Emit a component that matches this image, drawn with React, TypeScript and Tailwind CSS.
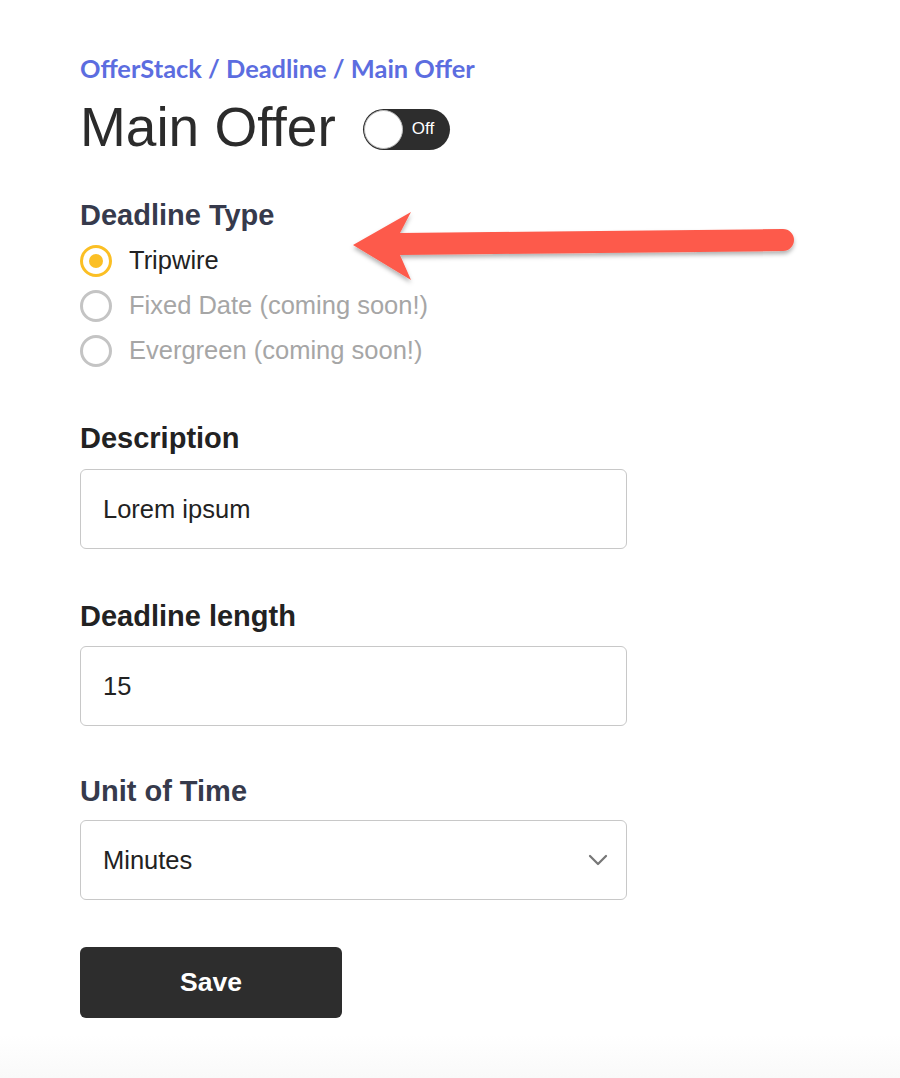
import { ChevronDown } from "lucide-react";

const sans = "font-['Liberation_Sans',Arial,sans-serif]";

function Radio({ label, checked, disabled }: { label: string; checked?: boolean; disabled?: boolean }) {
  return (
    <label className="flex h-[45px] items-center gap-[17px]">
      <span
        className={`flex h-[32px] w-[32px] items-center justify-center rounded-full border-[3px] ${
          checked ? "border-[#fbbf24]" : "border-[#c4c4c4]"
        }`}
      >
        {checked && <span className="h-[14px] w-[14px] rounded-full bg-[#fbbf24]" />}
      </span>
      <span className={`text-[25.5px] ${disabled ? "text-[#a6a6a6]" : "text-[#222]"}`}>{label}</span>
    </label>
  );
}

export default function App() {
  const input =
    "flex h-[80px] w-[547px] items-center rounded-[6px] border border-[#c8c8c8] px-[22px] text-[25.5px] text-[#222]";
  const label = "text-[29px] font-bold leading-[36px]";

  return (
    <div className={`relative min-h-[1078px] bg-gradient-to-b from-white from-[96%] to-[#f9f9f9] ${sans}`}>
      <div className="flex w-[548px] flex-col pl-[80px] pt-[52px]">
        <div className="font-['Lato',sans-serif] text-[25.4px] font-bold leading-[32px] text-[#5c6de0]">
          OfferStack / Deadline / Main Offer
        </div>

        <div className="mt-[11px] flex items-center gap-[27px]">
          <h1 className="text-[55px] leading-[64px] text-[#2b2b2b]">Main Offer</h1>
          <div className="mt-[4px] flex h-[41px] w-[87px] items-center rounded-full bg-[#2d2d2d] px-[1px]">
            <span className="h-[39px] w-[39px] rounded-full border border-[#bbb] bg-white" />
            <span className="ml-[9px] text-[17px] text-white">Off</span>
          </div>
        </div>

        <div className={`mt-[38px] ${label} text-[#363a4c]`}>Deadline Type</div>
        <div className="mt-[5px] flex flex-col">
          <Radio label="Tripwire" checked />
          <Radio label="Fixed Date (coming soon!)" disabled />
          <Radio label="Evergreen (coming soon!)" disabled />
        </div>

        <div className={`mt-[47px] mb-[13px] ${label} text-[#222]`}>Description</div>
        <div className={input}>Lorem ipsum</div>

        <div className={`mt-[49px] mb-[12px] ${label} text-[#222]`}>Deadline length</div>
        <div className={input}>15</div>

        <div className={`mt-[47px] mb-[11px] ${label} text-[#363a4c]`}>Unit of Time</div>
        <div className={`${input} justify-between pr-[12px]`}>
          Minutes
          <ChevronDown className="h-[32px] w-[32px] text-[#777]" strokeWidth={1.7} />
        </div>

        <button className="mt-[47px] flex h-[71px] w-[262px] items-center justify-center rounded-[6px] bg-[#2d2d2d] text-[26.5px] font-bold text-white">
          Save
        </button>
      </div>

      <svg className="absolute left-[340px] top-[200px]" width="470" height="100" viewBox="0 0 470 100">
        <defs>
          <filter id="sh" x="-10%" y="-50%" width="120%" height="200%">
            <feDropShadow dx="0" dy="3" stdDeviation="2" floodColor="#000" floodOpacity="0.3" />
          </filter>
        </defs>
        <g filter="url(#sh)" fill="#fd5a4b">
          <path d="M13 45 L71 12 L60 33 L443 29 A11 11 0 0 1 443 51 L60 55 L71 80 Z" />
        </g>
      </svg>
    </div>
  );
}
